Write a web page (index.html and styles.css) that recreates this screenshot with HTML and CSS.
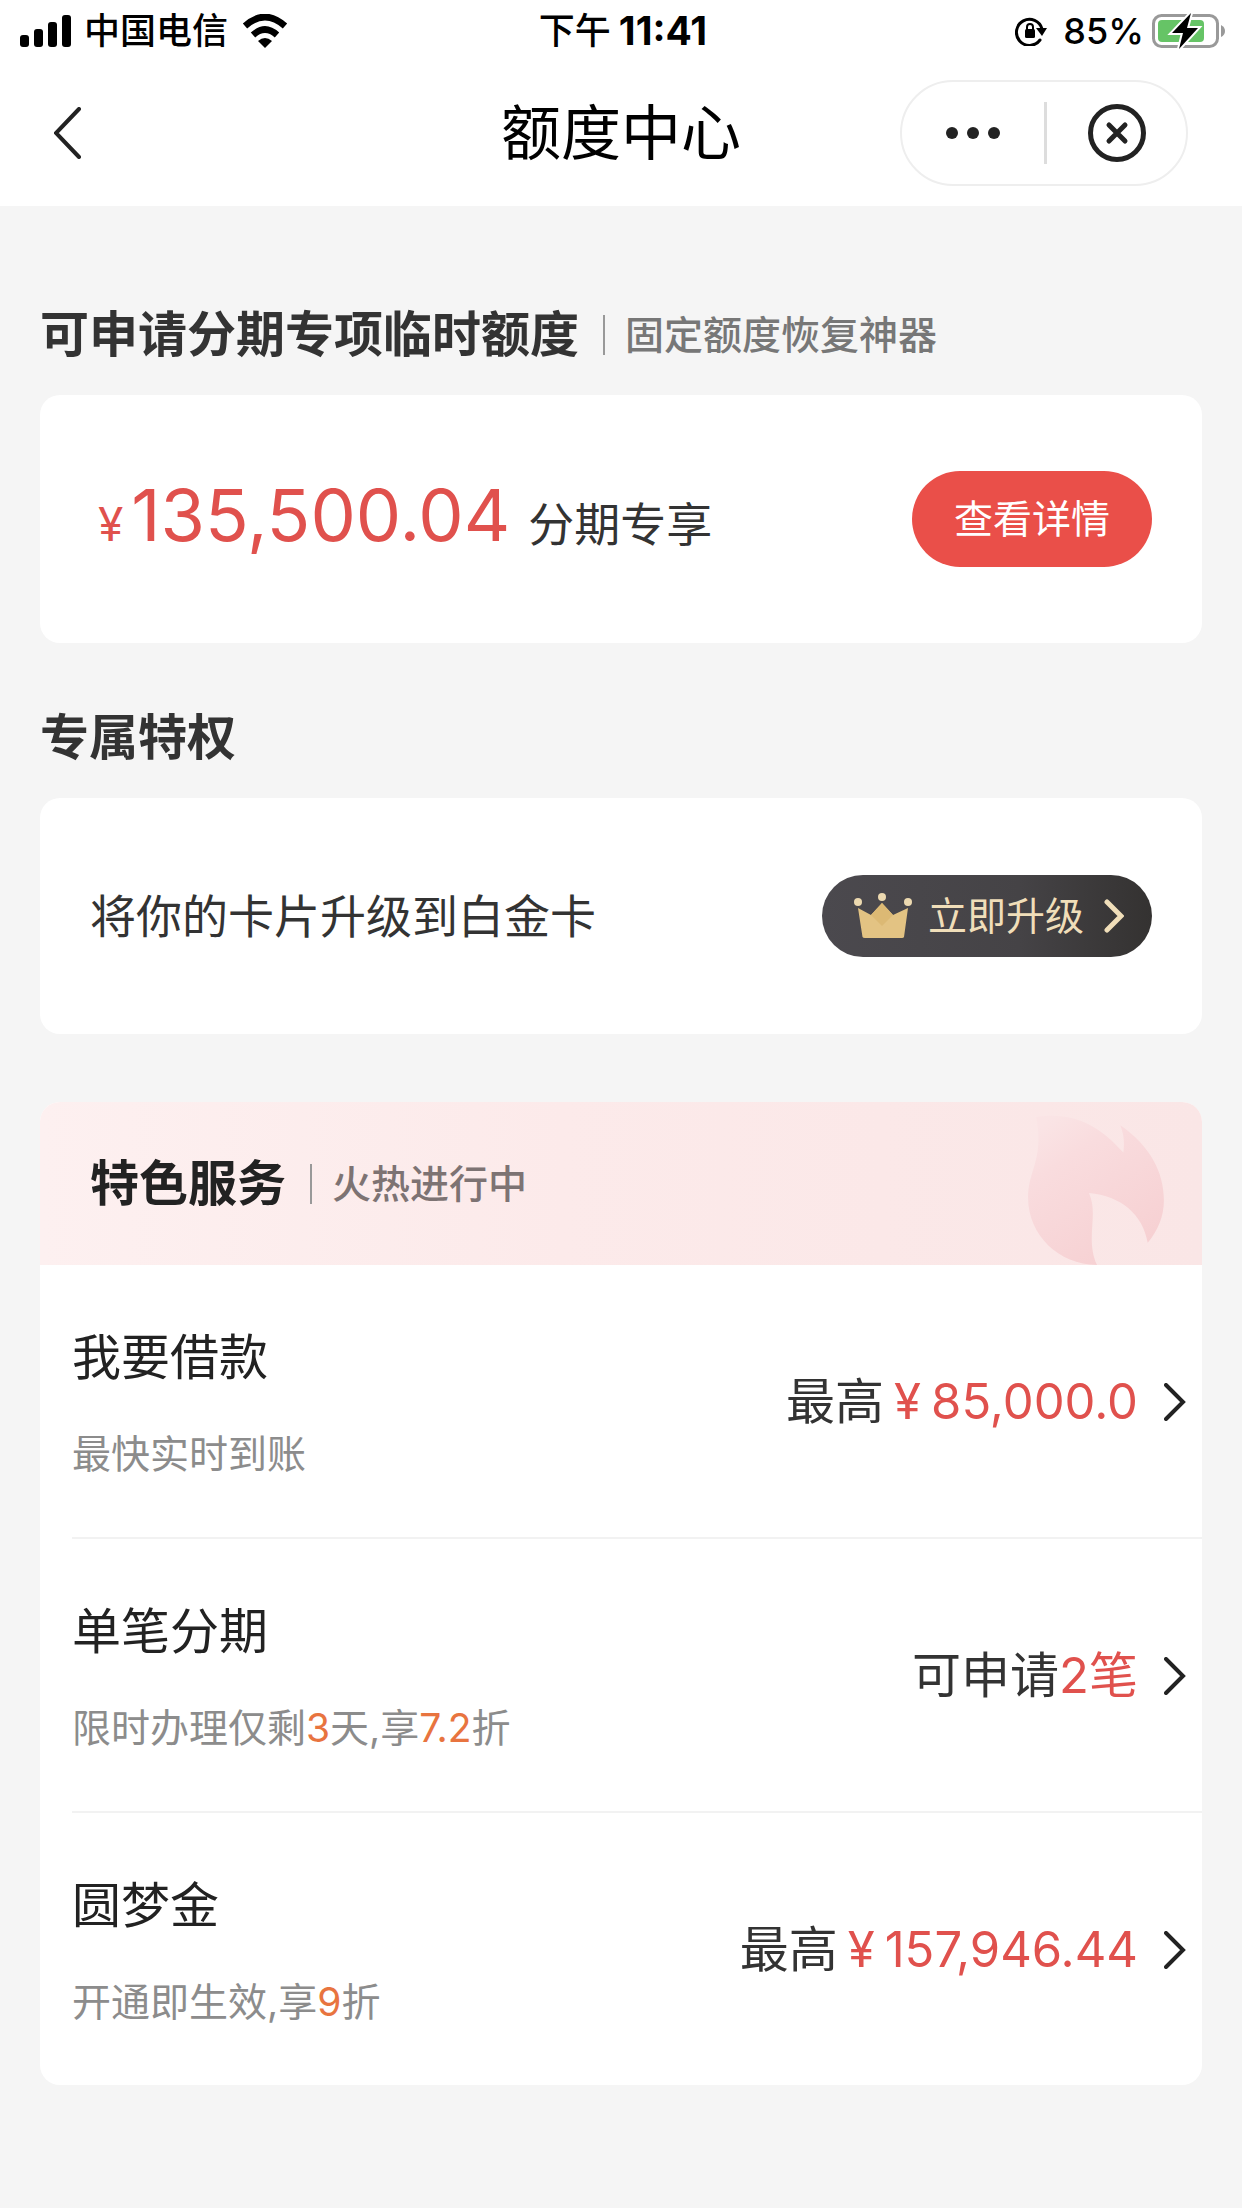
FILE: index.html
```html
<!DOCTYPE html>
<html lang="zh-CN">
<head>
<meta charset="utf-8">
<meta name="viewport" content="width=device-width, initial-scale=1">
<title>额度中心</title>
<link rel="stylesheet" href="styles.css">
</head>
<body>
<header class="topbar">
  <div class="status">
    <div class="status-left">
      <svg class="icon-signal" viewBox="0 0 52 32" aria-hidden="true"><rect x="0" y="20" width="9" height="12" rx="3"/><rect x="14" y="14" width="9" height="18" rx="3"/><rect x="28" y="7" width="9" height="25" rx="3"/><rect x="42" y="0" width="9" height="32" rx="3"/></svg>
      <span class="carrier">中国电信</span>
      <svg class="icon-wifi" viewBox="0 0 46 34" aria-hidden="true"><path d="M3 12Q23 -6 43 12M11 21Q23 10 35 21" fill="none" stroke="#000" stroke-width="6.5"/><path d="M16 27Q23 21 30 27L23 34Z"/></svg>
    </div>
    <div class="status-time"><span class="period">下午</span><span class="clock">11:41</span></div>
    <div class="status-right">
      <svg class="icon-lock" viewBox="0 0 32 30" aria-hidden="true"><path d="M25 24A13 13 0 1 1 27 13" fill="none" stroke="#000" stroke-width="3" stroke-linecap="round"/><path d="M21 12H32L27 20Z"/><rect x="10" y="13" width="10" height="9" rx="1.500"/><path d="M12 14V11a3 3 0 0 1 6 0V14" fill="none" stroke="#000" stroke-width="2"/></svg>
      <span class="percent">85%</span>
      <svg class="icon-battery" viewBox="0 0 74 36" aria-hidden="true"><rect x="1.500" y="2.500" width="64" height="31" rx="8" fill="none" stroke="#999" stroke-width="3"/><rect x="6" y="7" width="46" height="22" rx="4" fill="#66c466"/><path d="M69 12q4 2 4 6t-4 6z" fill="#999"/><path d="M39 0L20 20H31L27 36L46 15H35Z" stroke="#fff" stroke-width="4" paint-order="stroke"/></svg>
    </div>
  </div>
  <div class="navbar">
    <button class="back" type="button" aria-label="返回"><svg viewBox="0 0 28 52" aria-hidden="true"><path d="M25 2L2 26L25 50"/></svg></button>
    <h1 class="page-title">额度中心</h1>
    <div class="capsule">
      <button class="capsule-btn" type="button" aria-label="更多"><svg class="icon-more" viewBox="0 0 54 12" aria-hidden="true"><circle cx="6" cy="6" r="6"/><circle cx="27" cy="6" r="6"/><circle cx="48" cy="6" r="6"/></svg></button>
      <button class="capsule-btn" type="button" aria-label="关闭"><svg class="icon-close" viewBox="0 0 58 58" aria-hidden="true"><circle cx="29" cy="29" r="26.500"/><path d="M21 21L37 37M37 21L21 37"/></svg></button>
    </div>
  </div>
</header>
<main class="content">
  <section class="block">
    <div class="heading"><h2 class="title">可申请分期专项临时额度</h2><span class="subtitle">固定额度恢复神器</span></div>
    <div class="card quota">
      <p class="amount"><span class="yen">¥</span><span class="number">135,500.04</span><span class="amount-note">分期专享</span></p>
      <button class="detail-btn" type="button">查看详情</button>
    </div>
  </section>
  <section class="block">
    <div class="heading"><h2 class="title">专属特权</h2></div>
    <div class="card upgrade">
      <p class="upgrade-text">将你的卡片升级到白金卡</p>
      <button class="upgrade-btn" type="button">
        <svg class="icon-crown" viewBox="0 0 58 46" aria-hidden="true"><path d="M4 15L17 22L28 10L39 22L54 15L50 44Q49.500 45 48 45H11Q9 45 8.500 44Z" fill="#e3c383"/><path d="M28 10L39 22L28 33L17 22Z" fill="#dcb974"/><circle cx="4" cy="9" r="4" fill="#ecd9b0"/><circle cx="28" cy="4" r="4" fill="#ecd9b0"/><circle cx="54" cy="9" r="4" fill="#ecd9b0"/></svg>
        <span>立即升级</span>
        <svg class="icon-go" viewBox="0 0 20 34" aria-hidden="true"><path d="M3 3L17 17L3 31"/></svg>
      </button>
    </div>
  </section>
  <section class="card services">
    <div class="services-head">
      <h2 class="title">特色服务</h2><span class="subtitle">火热进行中</span>
      <svg class="icon-flame" viewBox="0 0 134 148" aria-hidden="true"><defs><linearGradient id="flame" x1="0.2" y1="0" x2="0.8" y2="1"><stop offset="0" stop-color="#fae4e5"/><stop offset="0.25" stop-color="#f9dcde"/><stop offset="1" stop-color="#f6cfd1"/></linearGradient></defs><path d="M8 2C44 -4 70 10 94 37C95 28 95 20 91 10C120 30 134 56 134 84C134 100 128 114 118 126C113 98 92 80 60 77C70 98 56 122 68 148C30 148 0 118 0 82C0 54 16 44 8 2Z" fill="url(#flame)"/></svg>
    </div>
    <ul class="rows">
      <li><a class="row" href="#loan">
        <span class="info"><span class="name">我要借款</span><span class="desc">最快实时到账</span></span>
        <span class="value"><span>最高</span><span class="red">¥</span><span class="red">85,000.0</span></span>
        <svg class="icon-next" viewBox="0 0 22 38" aria-hidden="true"><path d="M2 2L19 19L2 36"/></svg>
      </a></li>
      <li><a class="row" href="#instalment">
        <span class="info"><span class="name">单笔分期</span><span class="desc">限时办理仅剩<em>3</em>天,享<em>7.2</em>折</span></span>
        <span class="value tight"><span>可申请</span><span class="red">2笔</span></span>
        <svg class="icon-next" viewBox="0 0 22 38" aria-hidden="true"><path d="M2 2L19 19L2 36"/></svg>
      </a></li>
      <li><a class="row" href="#dream">
        <span class="info"><span class="name">圆梦金</span><span class="desc">开通即生效,享<em>9</em>折</span></span>
        <span class="value"><span>最高</span><span class="red">¥</span><span class="red">157,946.44</span></span>
        <svg class="icon-next" viewBox="0 0 22 38" aria-hidden="true"><path d="M2 2L19 19L2 36"/></svg>
      </a></li>
    </ul>
  </section>
</main>
</body>
</html>
```
FILE: styles.css
```css
* { box-sizing: border-box; margin: 0; padding: 0; }

body {
  min-height: 100vh;
  background: #f5f5f5;
  color: #333;
  font-family: Inter, "Noto Sans CJK SC", sans-serif;
}

button { border: 0; background: none; font: inherit; color: inherit; cursor: pointer; }
a { color: inherit; text-decoration: none; }
ul { list-style: none; }
em { font-style: normal; color: #e8743f; }
svg { display: block; flex: none; }

.topbar { background: #fff; padding-bottom: 20px; }

.status {
  display: grid;
  grid-template-columns: 1fr auto 1fr;
  align-items: center;
  height: 62px;
  padding: 0 16px 0 20px;
  color: #000;
  font-size: 36px;
  line-height: 48px;
}
.status-left, .status-right, .status-time { display: flex; align-items: center; }
.status-right { justify-content: flex-end; }
.icon-signal { width: 52px; height: 32px; }
.carrier { margin: 0 14px 0 12px; font-weight: 500; }
.icon-wifi { width: 46px; height: 34px; }
.period { margin-right: 8px; font-weight: 500; }
.clock { font-size: 39px; font-weight: 700; }
.icon-lock { width: 32px; height: 30px; margin-right: 16px; }
.percent { margin-right: 8px; font-weight: 500; }
.icon-battery { width: 74px; height: 36px; }

.navbar {
  display: grid;
  grid-template-columns: 1fr auto 1fr;
  align-items: center;
  height: 124px;
  padding: 18px 54px 0;
}
.back { justify-self: start; }
.back svg { width: 28px; height: 52px; fill: none; stroke: #222; stroke-width: 4; stroke-linecap: round; }
.page-title { color: #000; font-size: 60px; line-height: 80px; font-weight: 400; }
.capsule {
  justify-self: end;
  display: grid;
  grid-template-columns: 1fr 1fr;
  width: 288px;
  height: 106px;
  border: 2px solid #eee;
  border-radius: 53px;
}
.capsule-btn { display: grid; place-items: center; margin: 20px 0; }
.capsule-btn + .capsule-btn { border-left: 3px solid #ddd; }
.icon-more { width: 54px; height: 12px; fill: #222; }
.icon-close { width: 58px; height: 58px; fill: none; stroke: #222; stroke-width: 5; stroke-linecap: round; }

.content { display: flex; flex-direction: column; gap: 56px; padding: 90px 40px 120px; }
.heading { display: flex; align-items: center; height: 99px; padding-bottom: 21px; }
.title { font-size: 49px; line-height: 76px; font-weight: 600; }
.subtitle {
  display: flex;
  align-items: center;
  margin-left: 24px;
  color: #777;
  font-size: 39px;
  line-height: 56px;
  font-weight: 500;
}
.subtitle::before { content: ""; width: 2px; height: 40px; margin-right: 20px; background: #999; }

.card { background: #fff; border-radius: 20px; overflow: hidden; }
.quota, .upgrade { display: flex; align-items: center; justify-content: space-between; padding: 0 50px; }
.quota { height: 248px; padding-left: 58px; }
.amount { display: flex; align-items: baseline; padding-bottom: 8px; color: #e0514d; }
.yen { margin-right: 8px; font-size: 46px; line-height: 56px; }
.number { font-size: 72px; line-height: 88px; }
.amount-note { margin-left: 18px; color: #333; font-size: 46px; line-height: 68px; }
.detail-btn {
  width: 240px;
  height: 96px;
  border-radius: 48px;
  background: #ea4f49;
  color: #fff;
  font-size: 39px;
  line-height: 56px;
}

.upgrade { height: 236px; }
.upgrade-text { font-size: 46px; line-height: 68px; }
.upgrade-btn {
  display: flex;
  align-items: center;
  height: 82px;
  padding: 0 28px 0 32px;
  border-radius: 41px;
  background: linear-gradient(90deg, #4b494e, #454346 60%, #343231);
  color: #f0deb9;
  font-size: 39px;
  line-height: 56px;
}
.icon-crown { width: 58px; height: 46px; margin-right: 16px; }
.icon-go { width: 20px; height: 34px; margin-left: 20px; fill: none; stroke: #f0deb9; stroke-width: 5; stroke-linecap: round; }

.services { margin-top: 12px; }
.services-head {
  display: flex;
  align-items: center;
  height: 163px;
  padding: 0 38px 0 50px;
  background: linear-gradient(90deg, #fdf0f0, #fceaea 45%, #fae6e6);
}
.services-head .title { color: #222; font-weight: 700; }
.services-head .subtitle { color: #7d7373; }
.icon-flame { width: 136px; height: 150px; margin-left: auto; align-self: flex-end; }

.rows { padding-left: 32px; }
.rows li + li { border-top: 2px solid #f2f2f2; }
.row { display: flex; align-items: center; height: 272px; padding: 2px 16px 0 0; }
.info { display: flex; flex-direction: column; gap: 32px; }
.name { color: #222; font-size: 49px; line-height: 72px; }
.desc { color: #8c8c8c; font-size: 39px; line-height: 56px; }
.value { display: flex; align-items: baseline; gap: 10px; margin-left: auto; font-size: 49px; line-height: 72px; }
.tight { gap: 0; }
.red { color: #e0514d; }
.icon-next { width: 22px; height: 38px; margin-left: 26px; fill: none; stroke: #222; stroke-width: 4; stroke-linecap: round; }
```
